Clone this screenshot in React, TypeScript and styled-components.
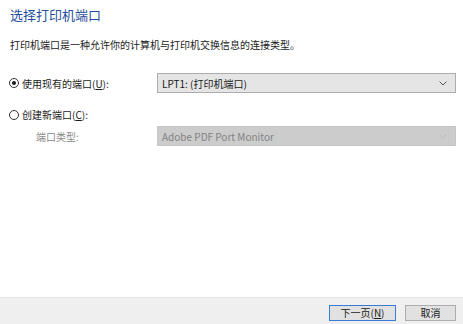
import React from 'react';
import styled, { createGlobalStyle } from 'styled-components';

const GlobalStyle = createGlobalStyle`
  html, body {
    margin: 0;
    padding: 0;
    background: #fff;
  }
  body {
    font-family: "Noto Sans CJK SC", "Noto Sans", sans-serif;
  }
`;

const Window = styled.div`
  width: 463px;
  height: 324px;
  display: flex;
  flex-direction: column;
  background: #fff;
  overflow: hidden;
`;

const Content = styled.div`
  flex: 1;
  padding: 6px 7px 0 9px;
  display: flex;
  flex-direction: column;
`;

const Title = styled.div`
  font-size: 13px;
  line-height: 18px;
  padding-left: 1px;
  color: #1f4e9c;
`;

const Description = styled.div`
  margin-top: 14px;
  padding-left: 1px;
  font-size: 10px;
  line-height: 14px;
  color: #1a1a1a;
`;

const Row = styled.div<{ $top: number }>`
  margin-top: ${p => p.$top}px;
  display: grid;
  grid-template-columns: 148px 1fr;
  align-items: center;
  min-height: 14px;
`;

const RadioLabel = styled.label`
  display: flex;
  align-items: center;
  gap: 3px;
  font-size: 10px;
  color: #1a1a1a;
  white-space: nowrap;
`;

const Circle = styled.span<{ $checked?: boolean }>`
  width: 10px;
  height: 10px;
  border: 1px solid #333;
  border-radius: 50%;
  box-sizing: border-box;
  display: inline-flex;
  align-items: center;
  justify-content: center;
  &::after {
    content: '';
    width: 4px;
    height: 4px;
    border-radius: 50%;
    background: ${p => (p.$checked ? '#1a1a1a' : 'transparent')};
  }
`;

const SubLabel = styled.div`
  padding-left: 27px;
  font-size: 10px;
  color: #8a8a8a;
`;

const Select = styled.div<{ $disabled?: boolean }>`
  height: 20px;
  box-sizing: border-box;
  border: 1px solid ${p => (p.$disabled ? '#c6c6c6' : '#adadad')};
  background: ${p => (p.$disabled ? '#cccccc' : '#e5e5e5')};
  color: ${p => (p.$disabled ? '#838383' : '#1a1a1a')};
  display: flex;
  align-items: center;
  padding: 0 8px 0 4px;
  font-size: 10px;
`;

const SelectText = styled.span`
  flex: 1;
`;

const Footer = styled.div`
  height: 27px;
  box-sizing: border-box;
  border-top: 1px solid #e3e3e3;
  background: #efefef;
  display: flex;
  justify-content: flex-end;
  align-items: center;
  gap: 9px;
  padding: 3px 7px 0 0;
`;

const Button = styled.button<{ $primary?: boolean }>`
  height: 16px;
  box-sizing: border-box;
  width: ${p => (p.$primary ? '67px' : '51px')};
  border: 1px solid ${p => (p.$primary ? '#3a7bd5' : '#adadad')};
  background: #e1e1e1;
  font-family: "Noto Sans CJK SC", "Noto Sans", sans-serif;
  font-size: 10px;
  color: #1a1a1a;
  padding: 0;
  line-height: 12px;
  box-shadow: ${p => (p.$primary ? 'inset 0 0 0 1px #e1e1e1' : 'none')};
`;

const Chevron = ({ color }: { color: string }) => (
  <svg width="8" height="5" viewBox="0 0 8 5">
    <path d="M0.5 0.5 L4 4 L7.5 0.5" fill="none" stroke={color} strokeWidth="1" />
  </svg>
);

const App = () => (
  <Window>
    <GlobalStyle />
    <Content>
      <Title>选择打印机端口</Title>
      <Description>打印机端口是一种允许你的计算机与打印机交换信息的连接类型。</Description>
      <Row $top={21}>
        <RadioLabel>
          <Circle $checked />
          <span>使用现有的端口(<u>U</u>):</span>
        </RadioLabel>
        <Select>
          <SelectText>LPT1: (打印机端口)</SelectText>
          <Chevron color="#555" />
        </Select>
      </Row>
      <Row $top={14}>
        <RadioLabel>
          <Circle />
          <span>创建新端口(<u>C</u>):</span>
        </RadioLabel>
      </Row>
      <Row $top={4}>
        <SubLabel>端口类型:</SubLabel>
        <Select $disabled>
          <SelectText>Adobe PDF Port Monitor</SelectText>
          <Chevron color="#bdbdbd" />
        </Select>
      </Row>
    </Content>
    <Footer>
      <Button $primary>下一页(<u>N</u>)</Button>
      <Button>取消</Button>
    </Footer>
  </Window>
);

export default App;
